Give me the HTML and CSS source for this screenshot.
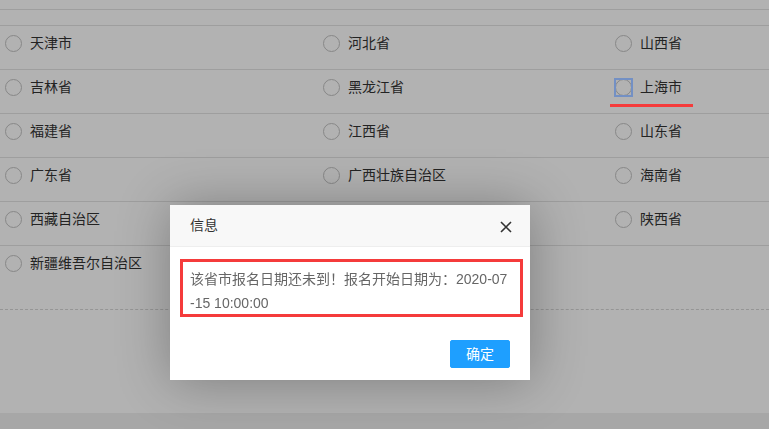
FILE: index.html
```html
<!DOCTYPE html>
<html lang="zh-CN">
<head>
<meta charset="utf-8">
<title>信息</title>
<link rel="stylesheet" href="styles.css">
</head>
<body>
<div class="page">
  <div class="rule rule-a"></div>
  <div class="rule rule-b"></div>
  <div class="grid">
    <div class="row">
      <div class="item"><span class="radio"></span><span class="label">天津市</span></div>
      <div class="item"><span class="radio"></span><span class="label">河北省</span></div>
      <div class="item"><span class="radio"></span><span class="label">山西省</span></div>
    </div>
    <div class="row">
      <div class="item"><span class="radio"></span><span class="label">吉林省</span></div>
      <div class="item"><span class="radio"></span><span class="label">黑龙江省</span></div>
      <div class="item marked"><span class="radio focus"></span><span class="label">上海市</span></div>
    </div>
    <div class="row">
      <div class="item"><span class="radio"></span><span class="label">福建省</span></div>
      <div class="item"><span class="radio"></span><span class="label">江西省</span></div>
      <div class="item"><span class="radio"></span><span class="label">山东省</span></div>
    </div>
    <div class="row">
      <div class="item"><span class="radio"></span><span class="label">广东省</span></div>
      <div class="item"><span class="radio"></span><span class="label">广西壮族自治区</span></div>
      <div class="item"><span class="radio"></span><span class="label">海南省</span></div>
    </div>
    <div class="row">
      <div class="item"><span class="radio"></span><span class="label">西藏自治区</span></div>
      <div class="item"><span class="radio"></span><span class="label">四川省</span></div>
      <div class="item"><span class="radio"></span><span class="label">陕西省</span></div>
    </div>
    <div class="row last">
      <div class="item"><span class="radio"></span><span class="label">新疆维吾尔自治区</span></div>
    </div>
  </div>
  <div class="dash"></div>
  <div class="spacer"></div>
  <div class="footer"></div>
</div>

<div class="shade"></div>

<div class="layer">
  <div class="layer-title">信息
    <span class="layer-close">
      <svg width="12" height="12" viewBox="0 0 12 12"><path d="M1 1 L11 11 M11 1 L1 11" stroke="#333" stroke-width="1.6" fill="none"/></svg>
    </span>
  </div>
  <div class="layer-content">该省市报名日期还未到！报名开始日期为：2020-07-15 10:00:00</div>
  <div class="layer-btn"><a class="btn">确定</a></div>
</div>
</body>
</html>
```

FILE: styles.css
```css
*, *::before, *::after { box-sizing: border-box; }
html, body { margin: 0; padding: 0; }
body {
  background: #fff;
  font-family: "Liberation Sans", "Noto Sans CJK SC", sans-serif;
  font-size: 14px;
  color: #333;
  overflow: hidden;
}
.page { width: 769px; }
.rule { border-bottom: 1px solid #e2e2e2; }
.rule-a { height: 10px; }
.rule-b { height: 16px; }
.row {
  display: grid;
  grid-template-columns: 318px 292px 1fr;
  height: 44px;
  border-bottom: 1px solid #e2e2e2;
}
.row.last { border-bottom: none; height: 43px; }
.item {
  display: flex;
  align-items: center;
  gap: 8px;
  height: 20px;
  margin-top: 7px;
  padding-left: 5px;
  line-height: 20px;
  position: relative;
}
.radio {
  width: 17px;
  height: 17px;
  border: 1px solid #c2c2c2;
  border-radius: 50%;
  flex: none;
  position: relative;
}
.label { color: #333; white-space: nowrap; }
.radio.focus::after {
  content: "";
  position: absolute;
  left: -2px;
  top: -2px;
  width: 19px;
  height: 19px;
  border: 2px solid #7390c4;
  z-index: 20;
}
.item.marked::after {
  content: "";
  position: absolute;
  left: 0;
  top: 27px;
  width: 83px;
  height: 3px;
  background: #f53b3b;
  z-index: 20;
}
.dash {
  margin-top: 20px;
  border-top: 1px dashed #d6d6d6;
}
.spacer { height: 103px; }
.footer { height: 20px; background: #f0f0f0; }

.shade {
  position: fixed;
  inset: 0;
  background: rgba(0, 0, 0, 0.3);
  z-index: 10;
}
.layer {
  position: fixed;
  left: 170px;
  top: 205px;
  width: 360px;
  background: #fff;
  box-shadow: 1px 1px 50px rgba(0, 0, 0, 0.3);
  z-index: 30;
}
.layer-title {
  position: relative;
  height: 42px;
  line-height: 41px;
  padding: 0 80px 0 20px;
  border-bottom: 1px solid #eee;
  background: #f8f8f8;
  color: #333;
  font-size: 14px;
}
.layer-close {
  position: absolute;
  right: 18px;
  top: 16px;
  width: 12px;
  height: 12px;
  display: block;
  line-height: 0;
}
.layer-content {
  position: relative;
  padding: 20px;
  line-height: 24px;
  font-size: 14px;
  color: #666;
  word-break: break-all;
}
.layer-content::after {
  content: "";
  position: absolute;
  left: 10px;
  top: 12px;
  width: 343px;
  height: 58px;
  border: 3px solid #f53b3b;
}
.layer-btn {
  display: flex;
  justify-content: flex-end;
  padding: 0 15px 12px;
}
.btn {
  display: block;
  height: 28px;
  line-height: 26px;
  padding: 0 15px;
  margin: 5px 5px 0;
  border: 1px solid #1e9fff;
  background: #1e9fff;
  color: #fff;
  border-radius: 2px;
  font-size: 14px;
}
```
